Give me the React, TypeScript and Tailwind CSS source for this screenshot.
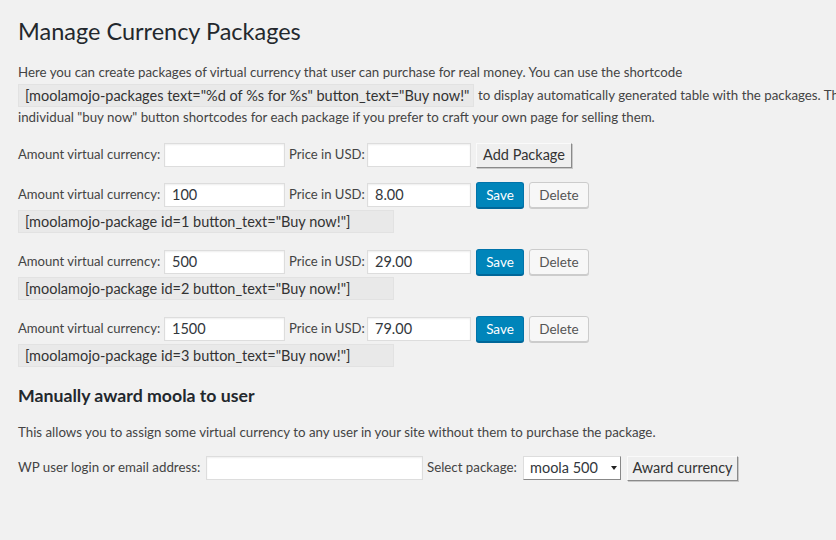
import React from 'react';

const font = { fontFamily: 'Lato, "Open Sans", sans-serif' };

const TextInput = ({ value = '', w }: { value?: string; w: string }) => (
  <div
    className={`${w} h-[24px] bg-white border border-[#ddd] shadow-[inset_0_1px_2px_rgba(0,0,0,0.07)] flex items-center px-[7px] text-[14.5px] text-[#32373c]`}
  >
    {value}
  </div>
);

const CodeBox = ({ children, w }: { children: React.ReactNode; w: string }) => (
  <div className={`${w} h-[23px] bg-[#e9e9e9] border border-[#e2e2e2] flex items-center px-[6px] text-[14.5px] text-[#333] whitespace-nowrap`}>
    {children}
  </div>
);

const OldButton = ({ children, w }: { children: React.ReactNode; w: string }) => (
  <div
    className={`${w} h-[25px] bg-[#efefef] border border-t-[#fafafa] border-l-[#fafafa] border-r-[#8a8a8a] border-b-[#8a8a8a] shadow-[1px_1px_0_#c8c8c8] flex items-center justify-center text-[14.5px] text-[#333]`}
  >
    {children}
  </div>
);

const AmountFields = ({ amount = '', price = '' }: { amount?: string; price?: string }) => (
  <>
    <span className="w-[146px] text-[13.1px]">Amount virtual currency:</span>
    <TextInput value={amount} w="w-[121px]" />
    <span className="ml-[4px] w-[78px] text-[13.1px]">Price in USD:</span>
    <TextInput value={price} w="w-[104px]" />
  </>
);

const PackageRow = ({ id, amount, price }: { id: number; amount: string; price: string }) => (
  <div className="flex flex-col gap-[2px]">
    <div className="flex items-center h-[26px] whitespace-nowrap">
      <AmountFields amount={amount} price={price} />
      <div className="ml-[5px] w-[48px] h-[26px] bg-[#0085ba] border border-[#0073aa] border-b-[#006799] rounded-[3px] shadow-[0_1px_0_#006799] flex items-center justify-center text-white text-[13.5px]">
        Save
      </div>
      <div className="ml-[5px] w-[60px] h-[26px] bg-[#f7f7f7] border border-[#ccc] rounded-[3px] shadow-[0_1px_0_#ccc] flex items-center justify-center text-[#555] text-[13.5px]">
        Delete
      </div>
    </div>
    <CodeBox w="w-[376px]">[moolamojo-package id={id} button_text="Buy now!"]</CodeBox>
  </div>
);

export default function App() {
  return (
    <div className="w-[836px] h-[540px] overflow-hidden bg-[#f1f1f1] text-[13.3px] text-[#444]" style={font}>
      <div className="pl-[18px] pt-[17px]">
        <h1 className="text-[23.5px] leading-[29px] text-[#23282d]">Manage Currency Packages</h1>

        <div className="mt-[16px] whitespace-nowrap">
          <div className="h-[22px] flex items-center">
            Here you can create packages of virtual currency that user can purchase for real money. You can use the shortcode
          </div>
          <div className="h-[23px] flex items-center gap-[4px]">
            <CodeBox w="w-[456px]">[moolamojo-packages text="%d of %s for %s" button_text="Buy now!"</CodeBox>
            <span>to display automatically generated table with the packages. There are also</span>
          </div>
          <div className="h-[22px] flex items-center">
            individual "buy now" button shortcodes for each package if you prefer to craft your own page for selling them.
          </div>
        </div>

        <div className="mt-[13px] flex items-center h-[26px] whitespace-nowrap">
          <AmountFields />
          <div className="ml-[5px]">
            <OldButton w="w-[96px]">Add Package</OldButton>
          </div>
        </div>

        <div className="mt-[14px] flex flex-col gap-[16px]">
          <PackageRow id={1} amount="100" price="8.00" />
          <PackageRow id={2} amount="500" price="29.00" />
          <PackageRow id={3} amount="1500" price="79.00" />
        </div>

        <h2 className="mt-[18px] text-[17.7px] font-bold leading-[22px] text-[#23282d]">Manually award moola to user</h2>
        <p className="mt-[16px] leading-[18px]">
          This allows you to assign some virtual currency to any user in your site without them to purchase the package.
        </p>

        <div className="mt-[14px] flex items-center h-[26px] whitespace-nowrap">
          <span className="w-[188px]">WP user login or email address:</span>
          <TextInput w="w-[217px]" />
          <span className="ml-[4px] w-[96px]">Select package:</span>
          <div className="w-[98px] h-[24px] bg-white border border-[#ddd] border-r-[#888] border-b-[#888] flex items-center pl-[6px] text-[14.5px] text-[#32373c] relative">
            moola 500
            <span className="absolute right-[3px] top-[9px] w-0 h-0 border-l-[3px] border-r-[3px] border-t-[4px] border-l-transparent border-r-transparent border-t-[#222]" />
          </div>
          <div className="ml-[6px]">
            <OldButton w="w-[111px]">Award currency</OldButton>
          </div>
        </div>
      </div>
    </div>
  );
}
